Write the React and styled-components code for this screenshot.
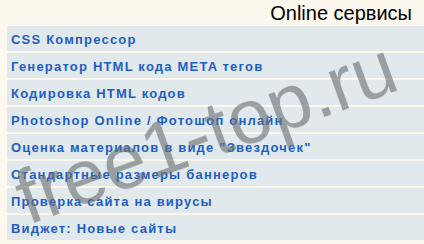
import React from "react";
import styled, { createGlobalStyle } from "styled-components";

const Global = createGlobalStyle`
  html, body { margin: 0; padding: 0; background: #fdf8ed; }
  body { font-family: "Liberation Sans", Arial, sans-serif; overflow: hidden; }
`;

const Page = styled.div`
  position: relative;
  width: 424px;
  height: 244px;
  overflow: hidden;
  background: #fdf8ed;
`;

const Header = styled.div`
  height: 26px;
  line-height: 26px;
  font-size: 20px;
  color: #000;
  text-align: right;
  padding-right: 12px;
`;

const List = styled.ul`
  list-style: none;
  margin: 0;
  padding: 0 0 0 7px;
  display: flex;
  flex-direction: column;
  gap: 2px;
`;

const Item = styled.li`
  height: 25px;
  box-sizing: border-box;
  padding: 1px 0 0 4px;
  background: #e1e9ec;
  line-height: 25px;
  font-size: 13px;
  font-weight: bold;
  letter-spacing: 1.2px;
  color: #1d5ec5;
  white-space: nowrap;
`;

const Watermark = styled.div`
  position: absolute;
  left: 206px;
  top: 132px;
  transform: translate(-50%, -50%) rotate(-20deg);
  font-size: 77px;
  line-height: 1;
  color: rgba(105, 110, 112, 0.6);
  white-space: nowrap;
  pointer-events: none;
`;

const items = [
  "CSS Компрессор",
  "Генератор HTML кода META тегов",
  "Кодировка HTML кодов",
  "Photoshop Online / Фотошоп онлайн",
  'Оценка материалов в виде "Звездочек"',
  "Стандартные размеры баннеров",
  "Проверка сайта на вирусы",
  "Виджет: Новые сайты",
];

export default function App() {
  return (
    <Page>
      <Global />
      <Header>Online сервисы</Header>
      <List>
        {items.map((t) => (
          <Item key={t}>{t}</Item>
        ))}
      </List>
      <Watermark>free1-top.ru</Watermark>
    </Page>
  );
}
